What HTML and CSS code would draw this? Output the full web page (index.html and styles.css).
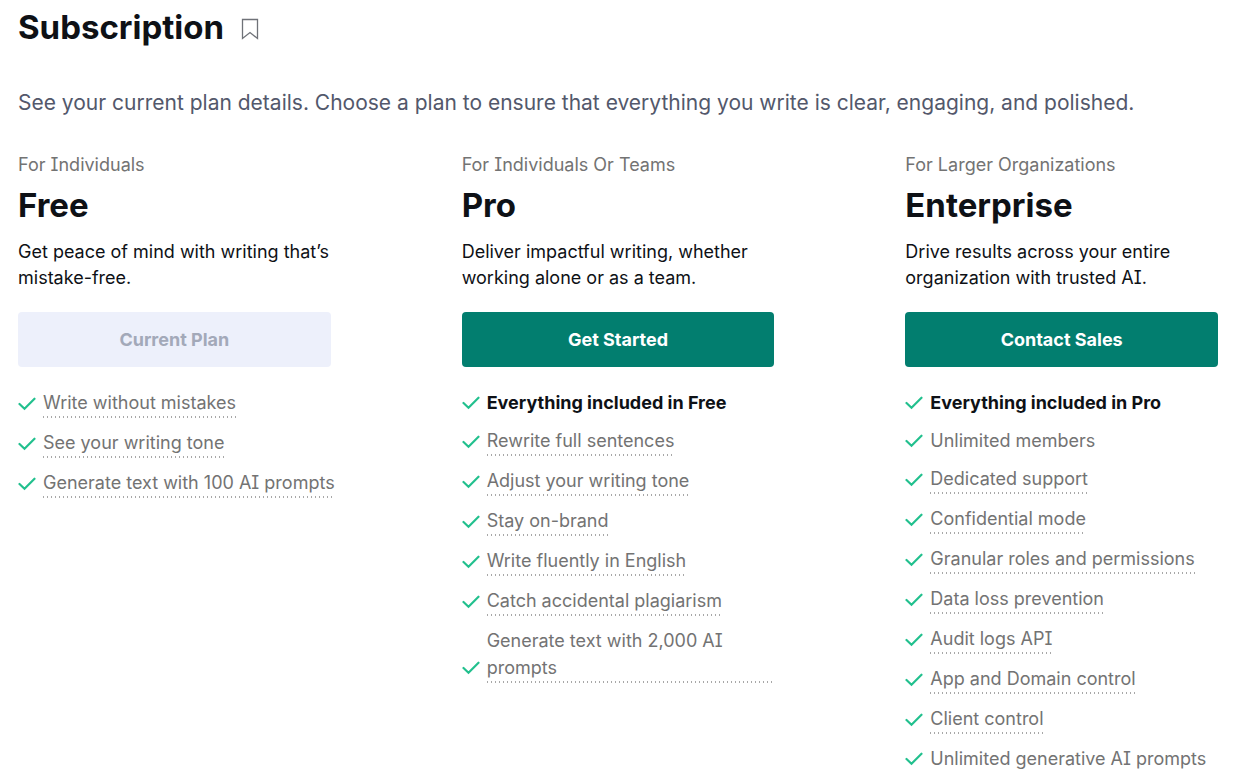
FILE: index.html
```html
<!DOCTYPE html>
<html lang="en">
<head>
    <meta charset="UTF-8">
    <meta name="viewport" content="width=device-width, initial-scale=1.0">
    <title>Subscription</title>
    <link rel="stylesheet" href="styles.css">
</head>
<body>
    <svg class="sprite" aria-hidden="true">
        <symbol id="check" viewBox="0 0 18 14">
            <path d="M1.5 7 6.5 11.7 16.5 1.7" fill="none" stroke="currentColor" stroke-width="2.2" stroke-linecap="round"/>
        </symbol>
    </svg>

    <main class="page">
        <header class="page-header">
            <h1>Subscription</h1>
            <svg class="bookmark" viewBox="0 0 20 22" aria-hidden="true">
                <path d="M2.5 1.5H17.5V20.5L10 14.5 2.5 20.5Z" fill="none" stroke="currentColor" stroke-width="1.3"/>
            </svg>
        </header>
        <p class="intro">See your current plan details. Choose a plan to ensure that everything you write is clear, engaging, and polished.</p>

        <div class="plans">
            <section class="plan">
                <p class="audience">For Individuals</p>
                <h2>Free</h2>
                <p class="summary">Get peace of mind with writing that’s mistake-free.</p>
                <button class="btn" type="button" disabled>Current Plan</button>
                <ul class="features short">
                    <li><svg><use href="#check"/></svg><span class="hint">Write without mistakes</span></li>
                    <li><svg><use href="#check"/></svg><span class="hint">See your writing tone</span></li>
                    <li><svg><use href="#check"/></svg><span class="hint">Generate text with 100 AI prompts</span></li>
                </ul>
            </section>

            <section class="plan">
                <p class="audience">For Individuals Or Teams</p>
                <h2>Pro</h2>
                <p class="summary">Deliver impactful writing, whether working alone or as a team.</p>
                <button class="btn" type="button">Get Started</button>
                <ul class="features">
                    <li><svg><use href="#check"/></svg><strong>Everything included in Free</strong></li>
                    <li><svg><use href="#check"/></svg><span class="hint">Rewrite full sentences</span></li>
                    <li><svg><use href="#check"/></svg><span class="hint">Adjust your writing tone</span></li>
                    <li><svg><use href="#check"/></svg><span class="hint">Stay on-brand</span></li>
                    <li><svg><use href="#check"/></svg><span class="hint">Write fluently in English</span></li>
                    <li><svg><use href="#check"/></svg><span class="hint">Catch accidental plagiarism</span></li>
                    <li class="wrapped"><svg><use href="#check"/></svg><span class="hint">Generate text with 2,000 AI prompts</span></li>
                </ul>
            </section>

            <section class="plan">
                <p class="audience">For Larger Organizations</p>
                <h2>Enterprise</h2>
                <p class="summary">Drive results across your entire organization with trusted AI.</p>
                <button class="btn" type="button">Contact Sales</button>
                <ul class="features">
                    <li><svg><use href="#check"/></svg><strong>Everything included in Pro</strong></li>
                    <li><svg><use href="#check"/></svg><span>Unlimited members</span></li>
                    <li><svg><use href="#check"/></svg><span class="hint">Dedicated support</span></li>
                    <li><svg><use href="#check"/></svg><span class="hint">Confidential mode</span></li>
                    <li><svg><use href="#check"/></svg><span class="hint">Granular roles and permissions</span></li>
                    <li><svg><use href="#check"/></svg><span class="hint">Data loss prevention</span></li>
                    <li><svg><use href="#check"/></svg><span class="hint">Audit logs API</span></li>
                    <li><svg><use href="#check"/></svg><span class="hint">App and Domain control</span></li>
                    <li><svg><use href="#check"/></svg><span class="hint">Client control</span></li>
                    <li><svg><use href="#check"/></svg><span>Unlimited generative AI prompts</span></li>
                </ul>
            </section>
        </div>
    </main>
</body>
</html>
```
FILE: styles.css
```css
* {
    box-sizing: border-box;
}
body {
    margin: 0;
    font-family: Inter, sans-serif;
    font-size: 18px;
    line-height: 26px;
    font-feature-settings: "cv08";
    color: #0e1116;
    background: #fff;
}
h1, h2, p, ul {
    margin: 0;
    padding: 0;
}
.sprite {
    display: none;
}
.page {
    padding: 6px 24px 0 18px;
}
.page-header {
    display: flex;
    align-items: center;
    gap: 16px;
}
h1, h2 {
    font-size: 33px;
    line-height: 42px;
    font-weight: 700;
}
.bookmark {
    width: 20px;
    height: 22px;
    margin-top: 4px;
    color: #6f7278;
}
.intro {
    margin-top: 40px;
    font-size: 21px;
    line-height: 30px;
    color: #53586b;
}
.plans {
    display: grid;
    grid-template-columns: repeat(3, minmax(0, 1fr));
    column-gap: 131px;
    margin-top: 34px;
}
.audience {
    color: #737373;
}
.plan h2 {
    margin-top: 6px;
}
.summary {
    margin-top: 13px;
}
.btn {
    width: 100%;
    height: 55px;
    margin-top: 21px;
    border: none;
    border-radius: 4px;
    background: #027e6f;
    color: #fff;
    font: inherit;
    font-weight: 700;
    cursor: pointer;
}
.btn:disabled {
    background: #edf0fb;
    color: #a3a9b9;
    cursor: default;
}
.features {
    display: flex;
    flex-direction: column;
    gap: 11px;
    margin-top: 22px;
    list-style: none;
    line-height: 27px;
    color: #737373;
}
.features li {
    display: flex;
    align-items: center;
    gap: 7px;
}
.features svg {
    flex: none;
    width: 18px;
    height: 14px;
    color: #22c08e;
}
.features strong {
    color: #0e1116;
}
.features .wrapped {
    align-items: flex-end;
}
.wrapped svg {
    margin-bottom: 8px;
}
.short {
    white-space: nowrap;
}
.hint {
    padding-bottom: 2px;
    background: repeating-linear-gradient(90deg, #a8a8a8 0 1px, transparent 1px 4px) left bottom / 100% 2px no-repeat;
}
```
